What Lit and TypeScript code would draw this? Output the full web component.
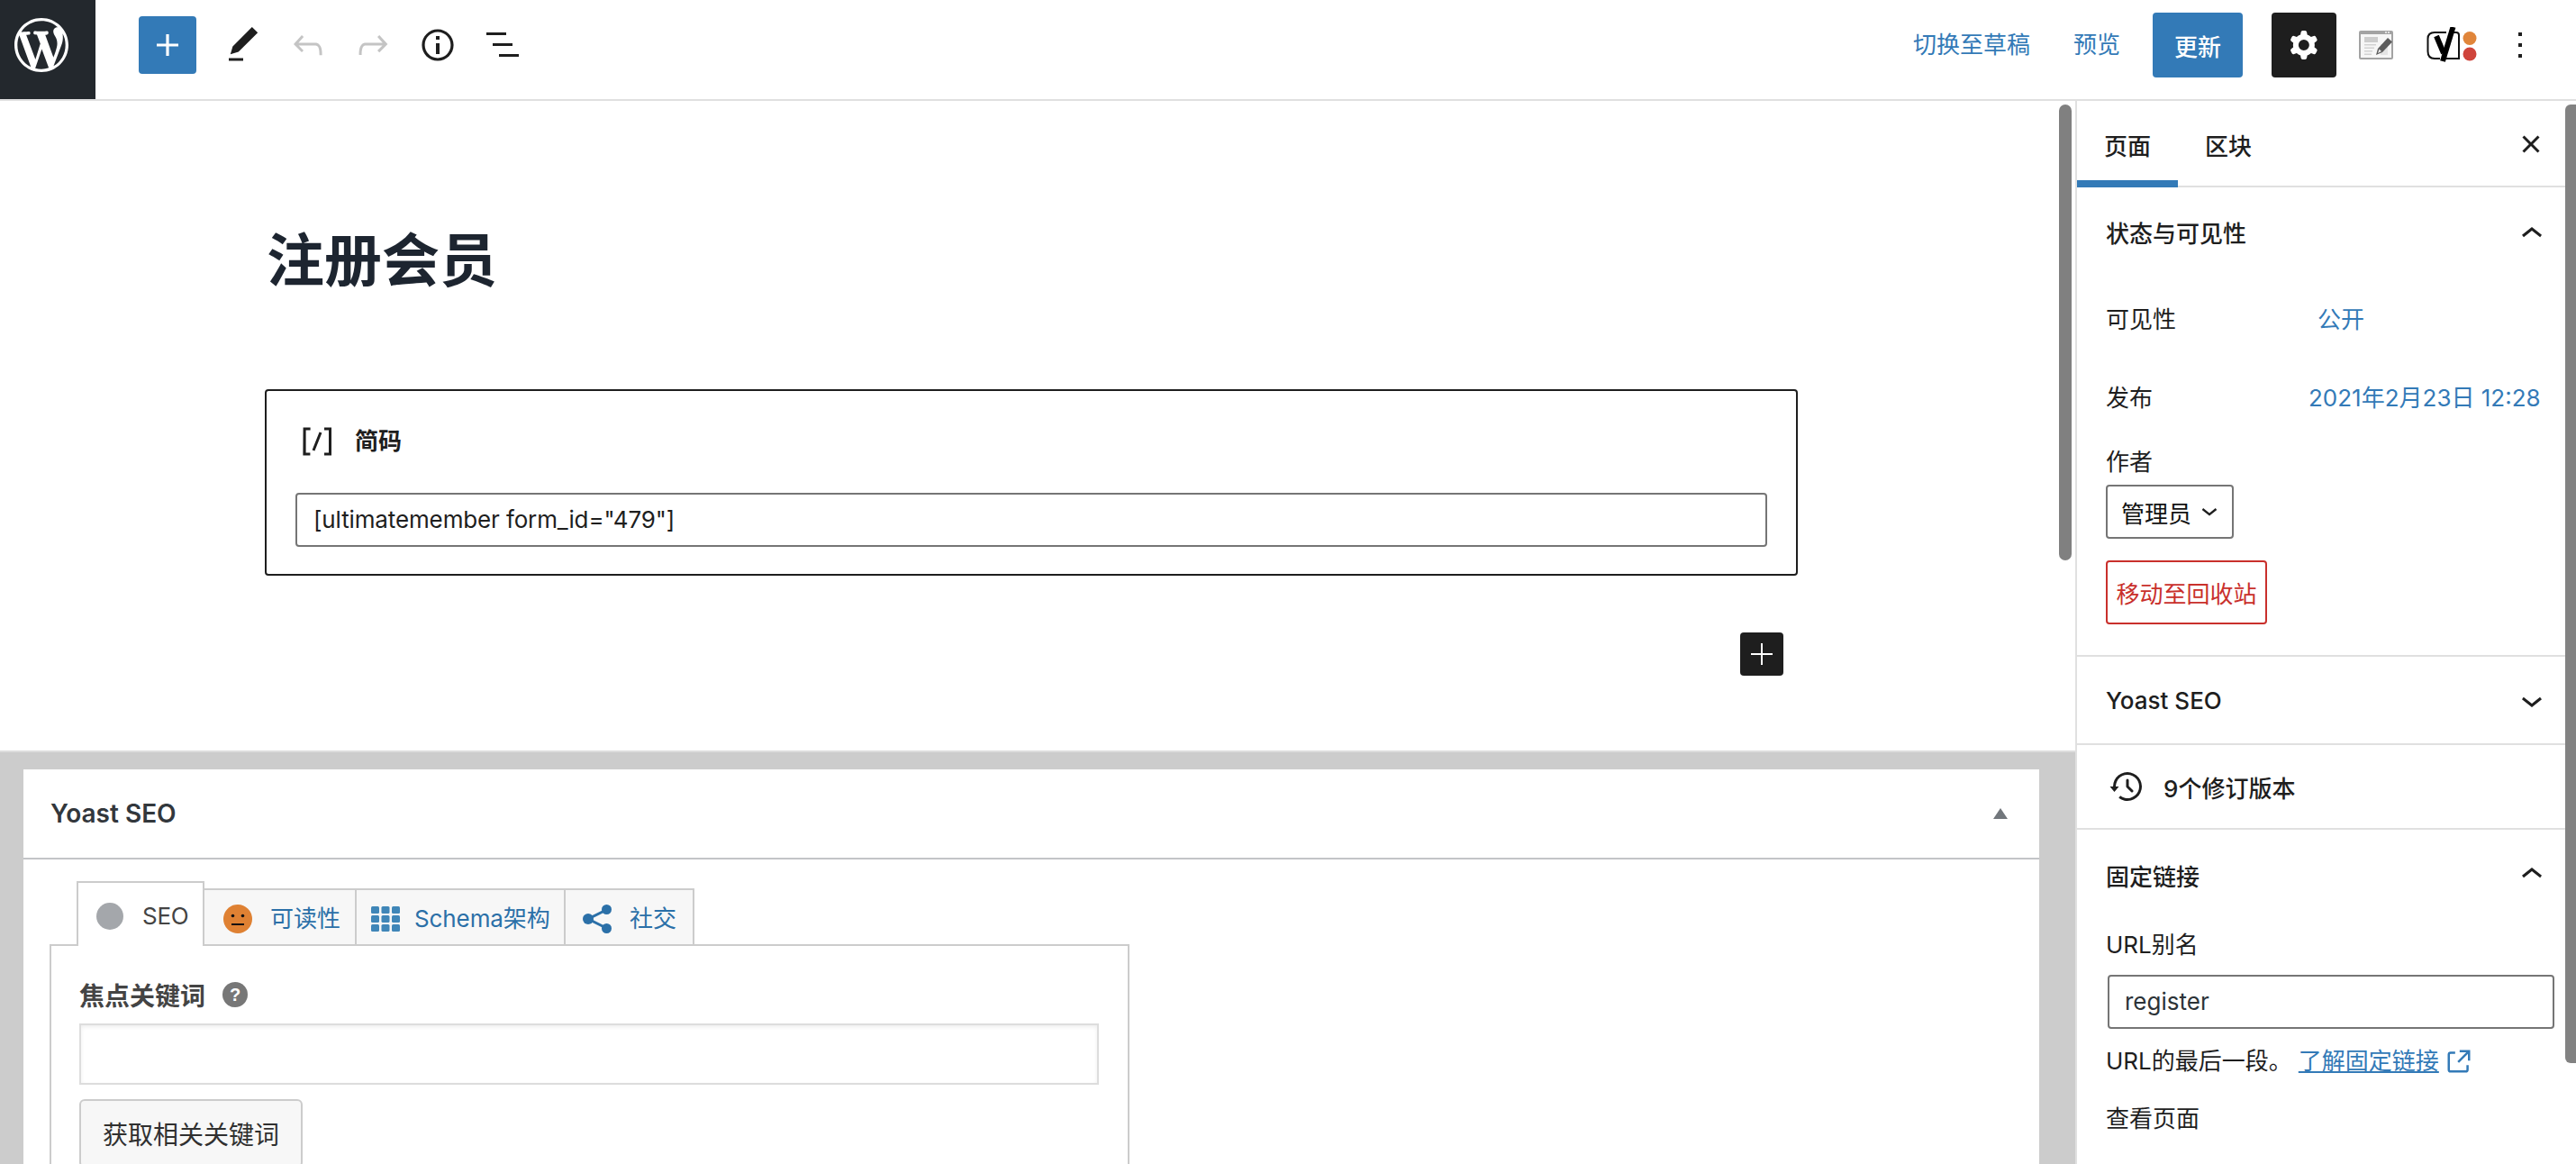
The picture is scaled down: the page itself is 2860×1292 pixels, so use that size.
import { LitElement, html, css } from "lit";
import { customElement } from "lit/decorators.js";

const up = html`<svg class="ic" viewBox="0 0 24 24"><path d="M6.5 12.4L12 8l5.5 4.4-.9 1.2L12 10l-4.5 3.6-1-1.2z"/></svg>`;
const down = html`<svg class="ic" viewBox="0 0 24 24"><path d="M17.5 11.6L12 16l-5.5-4.4.9-1.2L12 14l4.5-3.6 1 1.2z"/></svg>`;

@customElement("app-root")
export class AppRoot extends LitElement {
  static styles = css`
    :host { display: block; width: 2860px; height: 1292px; overflow: hidden; background: #fff;
      font-family: "Inter", "Noto Sans CJK SC", sans-serif; font-size: 26px; color: #1e1e1e; }
    * { box-sizing: border-box; }
    .ic { width: 48px; height: 48px; flex: none; display: block; fill: #1e1e1e; }
    .root { display: flex; flex-direction: column; height: 1292px; }

    .top { flex: none; height: 112px; border-bottom: 2px solid #e0e0e0; display: flex; align-items: center; padding-bottom: 10px; }
    .logo { width: 106px; height: 110px; margin-bottom: -10px; padding: 0 14px 10px 0; background: #23282d; display: flex; align-items: center; justify-content: center; }
    .logo svg { width: 60px; height: 60px; fill: #fff; display: block; }
    .tools { display: flex; align-items: center; gap: 24px; margin-left: 48px; }
    .add { width: 64px; height: 64px; background: #337ab7; border-radius: 4px; display: flex; align-items: center; justify-content: center; margin-right: 4px; }
    .add .ic { fill: #fff; }
    .off { fill: #c4c4c4; }
    .right { margin-left: auto; display: flex; align-items: center; padding-right: 38px; }
    .tlink { color: #337ab7; line-height: 36px; }
    .draft { margin-right: 48px; }
    .prev { margin-right: 36px; }
    .update { width: 100px; height: 72px; background: #337ab7; color: #fff; border-radius: 4px; display: flex; align-items: center; justify-content: center; margin-right: 32px; font-weight: 500; }
    .gear { width: 72px; height: 72px; background: #1e1e1e; border-radius: 4px; display: flex; align-items: center; justify-content: center; margin-right: 25px; }
    .gear .ic { fill: #fff; }
    .ypage { width: 38px; height: 32px; display: block; margin-right: 37px; }
    .ylogo { width: 58px; height: 40px; display: block; margin-right: 22px; }

    .main { flex: 1; min-height: 0; display: flex; position: relative; }
    .thumb { position: absolute; top: 4px; background: #808080; }
    .thumb.a { left: 2286px; width: 14px; height: 506px; border-radius: 7px; }
    .thumb.b { left: 2848px; width: 12px; height: 1064px; border-radius: 6px 0 0 6px; opacity: .98; }

    .content { width: 2304px; flex: none; display: flex; flex-direction: column; }
    .editor { flex: none; height: 721px; padding: 137px 0 0 294px; }
    .title { margin: 0 0 103px 2px; font-size: 64px; line-height: 80px; font-weight: 700; color: #1d2530; }
    .block { width: 1702px; height: 207px; border: 2px solid #1e1e1e; border-radius: 4px; padding: 32px 32px 0; }
    .bhead { display: flex; align-items: center; height: 48px; font-weight: 600; line-height: 48px; }
    .bhead .ic { margin-right: 18px; }
    .binput { margin-top: 33px; width: 1634px; height: 60px; border: 2px solid #757575; border-radius: 4px; padding-left: 18px; line-height: 56px; white-space: nowrap; letter-spacing: -.13px; }
    .inserter { margin: 63px 0 0 1638px; width: 48px; height: 48px; background: #1e1e1e; border-radius: 4px; display: flex; align-items: center; justify-content: center; }
    .inserter .ic { fill: #fff; }

    .meta-wrap { flex: 1; min-height: 0; overflow: hidden; background: #ccc; border-top: 2px solid #ddd; padding: 19px 40px 0 26px; }
    .meta { background: #fff; height: 100%; }
    .mhead { height: 100px; border-bottom: 2px solid #c3c4c7; display: flex; align-items: center; padding: 0 35px 0 30px; justify-content: space-between; font-size: 28px; font-weight: 600; color: #32373c; }
    .mhead svg { width: 16px; height: 12px; fill: #72777c; display: block; margin-top: 0; }
    .mbody { padding: 24px 0 0 29px; }
    .ytabs { display: flex; align-items: flex-end; margin-left: 30px; height: 72px; position: relative; z-index: 1; }
    .ytab { height: 64px; padding-top: 4px; border: 2px solid #ccc; border-left: 0; background: #f7f7f7; display: flex; align-items: center; color: #2b70a8; line-height: 36px; white-space: nowrap; }
    .ytab.on { height: 72px; width: 142px; padding-left: 20px; gap: 21px; border-left: 2px solid #ccc; border-bottom: 0; background: #fff; color: #444; letter-spacing: -.3px; }
    .ytab.read { width: 169px; padding-left: 21px; gap: 20px; }
    .ytab.sch { width: 232px; padding-left: 16px; gap: 16px; letter-spacing: -.1px; }
    .ytab.soc { width: 143px; padding-left: 19px; gap: 20px; }
    .dot { width: 30px; height: 30px; border-radius: 50%; background: #a4a7ab; flex: none; }
    .ytab svg { display: block; flex: none; }
    .ypanel { margin-top: -2px; width: 1199px; border: 2px solid #ccc; padding: 36px 31px 60px; }
    .flabel { display: flex; align-items: center; height: 36px; font-size: 28px; font-weight: 700; color: #444; gap: 19px; }
    .help { width: 28px; height: 28px; border-radius: 50%; background: #777; color: #fff; font-size: 20px; font-weight: 700; line-height: 28px; text-align: center; font-family: "Liberation Sans", sans-serif; }
    .finput { margin-top: 14px; width: 1132px; height: 68px; border: 2px solid #ddd; box-shadow: inset 0 2px 4px rgba(0,0,0,.07); }
    .fbtn { margin-top: 16px; width: 248px; height: 76px; border: 2px solid #ccc; border-radius: 6px; background: #f7f7f7; font-size: 28px; color: #303030; display: flex; align-items: center; justify-content: center; white-space: nowrap; }

    .side { width: 556px; flex: none; border-left: 2px solid #e0e0e0; display: flex; flex-direction: column; }
    .stabs { flex: none; height: 96px; border-bottom: 2px solid #e0e0e0; display: flex; align-items: stretch; position: relative; }
    .stab { width: 112px; display: flex; align-items: center; justify-content: center; font-weight: 500; border-bottom: 8px solid transparent; margin-bottom: -2px; padding-top: 8px; }
    .stab.on { border-bottom-color: #337ab7; }
    .close { margin: 2px 26px 0 auto; align-self: center; }
    .sec { border-bottom: 2px solid #e0e0e0; padding: 0 26px 0 32px; flex: none; }
    .shead { display: flex; align-items: center; justify-content: space-between; font-weight: 500; height: 104px; margin-right: -1px; }
    .shead .txt { margin-top: -6px; }
    .shead.y { height: 96px; }
    .shead.p { height: 100px; }
    .shead.p .txt { margin-top: 0; }
    .shead.y .txt { margin-top: 0; }
    .row { display: flex; align-items: center; line-height: 36px; }
    .row.vis { height: 85px; }
    .row.pub { height: 90px; }
    .vl { color: #337ab7; }
    .l1 { width: 235px; }
    .l2 { width: 225px; }
    .line { line-height: 36px; height: 36px; white-space: nowrap; display: flex; align-items: center; }
    .select { width: 142px; height: 60px; border: 2px solid #757575; border-radius: 4px; margin-top: 7px; display: flex; align-items: center; padding-left: 15px; color: #111; }
    .select svg { width: 36px; height: 36px; margin-left: 2px; fill: #1e1e1e; flex: none; }
    .trash { margin-top: 24px; width: 179px; height: 71px; border: 2px solid #c9302c; border-radius: 4px; color: #c9302c; display: flex; align-items: center; justify-content: center; white-space: nowrap; }
    .hist { height: 92px; display: flex; align-items: center; font-weight: 500; gap: 16px; }
    .slug { margin: 15px 0 0 2px; width: 496px; height: 60px; border: 2px solid #757575; border-radius: 4px; padding-left: 17px; line-height: 56px; color: #2c3338; }
    .lk { color: #337ab7; text-decoration: underline; margin-left: 7px; }
    .line svg { width: 40px; height: 40px; fill: #337ab7; margin-left: 2px; display: block; }
  `;

  render() {
    return html`<div class="root">
      <header class="top">
        <div class="logo"><svg viewBox="0 0 20 20"><path d="M20 10c0-5.51-4.49-10-10-10C4.48 0 0 4.49 0 10c0 5.52 4.48 10 10 10 5.51 0 10-4.48 10-10zM7.78 15.37L4.37 6.22c.55-.02 1.17-.08 1.17-.08.5-.06.44-1.13-.06-1.11 0 0-1.45.11-2.37.11-.18 0-.37 0-.58-.01C4.12 2.69 6.87 1.11 10 1.11c2.33 0 4.45.87 6.05 2.34-.68-.11-1.65.39-1.65 1.58 0 .74.45 1.36.9 2.1.35.61.55 1.36.55 2.46 0 1.49-1.4 5-1.4 5l-3.03-8.37c.54-.02.82-.17.82-.17.5-.05.44-1.25-.06-1.22 0 0-1.44.12-2.38.12-.87 0-2.33-.12-2.33-.12-.5-.03-.56 1.2-.06 1.22l.92.08 1.26 3.41zM17.41 10c.24-.64.74-1.87.43-4.25.7 1.29 1.05 2.71 1.05 4.25 0 3.29-1.73 6.24-4.4 7.78.97-2.59 1.94-5.2 2.92-7.78zM6.1 18.09C3.12 16.65 1.11 13.53 1.11 10c0-1.3.23-2.48.72-3.59C3.25 10.3 4.67 14.2 6.1 18.09zm4.03-6.63l2.58 6.98c-.86.29-1.76.45-2.71.45-.79 0-1.57-.11-2.29-.33.81-2.38 1.62-4.74 2.42-7.1z"/></svg></div>
        <div class="tools">
          <div class="add"><svg class="ic" viewBox="0 0 24 24"><path d="M18 11.2h-5.2V6h-1.6v5.2H6v1.6h5.2V18h1.6v-5.2H18z"/></svg></div>
          <svg class="ic" viewBox="0 0 24 24"><path d="M20.1 5.1L16.9 2 6.2 12.7l-1.3 4.4 4.5-1.3L20.1 5.1zM4 20.8h8v-1.5H4v1.5z"/></svg>
          <svg class="ic off" viewBox="0 0 24 24"><path d="M18.3 11.7c-.6-.6-1.4-.9-2.3-.9H6.7l2.9-3.3-1.1-1-4.5 5L8.5 16l1-1-2.7-2.7H16c.5 0 .9.2 1.3.5 1 1 1 3.4 1 4.5v.3h1.5v-.2c0-1.5 0-4.3-1.5-5.7z"/></svg>
          <svg class="ic off" viewBox="0 0 24 24"><path d="M15.6 6.5l-1.1 1 2.9 3.3H8c-.9 0-1.7.3-2.3.9-1.4 1.5-1.4 4.2-1.4 5.6v.2h1.5v-.3c0-1.1 0-3.5 1-4.5.3-.3.7-.5 1.3-.5h9.2L14.5 15l1.1 1.1 4.6-4.6-4.6-5z"/></svg>
          <svg class="ic" viewBox="0 0 24 24"><path d="M12 3.2c-4.8 0-8.8 3.9-8.8 8.8 0 4.8 3.9 8.8 8.8 8.8 4.8 0 8.8-3.9 8.8-8.8 0-4.8-4-8.8-8.8-8.8zm0 16c-4 0-7.2-3.3-7.2-7.2C4.8 8 8 4.8 12 4.8s7.2 3.3 7.2 7.2c0 4-3.2 7.2-7.2 7.2zM11 17h2v-6h-2v6zm0-8h2V7h-2v2z"/></svg>
          <svg class="ic" viewBox="0 0 48 48"><path d="M6 10h22v3H6zM13 22h22v3H13zM20 34h22v3H20z"/></svg>
        </div>
        <div class="right">
          <span class="tlink draft">切换至草稿</span>
          <span class="tlink prev">预览</span>
          <div class="update">更新</div>
          <div class="gear"><svg class="ic" viewBox="0 0 24 24"><path fill-rule="evenodd" d="M10.289 4.836A1 1 0 0111.275 4h1.306a1 1 0 01.987.836l.244 1.466c.787.26 1.503.679 2.108 1.218l1.393-.522a1 1 0 011.216.437l.653 1.13a1 1 0 01-.23 1.273l-1.148.944a6.025 6.025 0 010 2.435l1.149.946a1 1 0 01.23 1.272l-.653 1.13a1 1 0 01-1.216.437l-1.394-.522c-.605.54-1.32.958-2.108 1.218l-.244 1.466a1 1 0 01-.987.836h-1.306a1 1 0 01-.986-.836l-.244-1.466a5.995 5.995 0 01-2.108-1.218l-1.394.522a1 1 0 01-1.217-.436l-.653-1.131a1 1 0 01.23-1.272l1.149-.946a6.026 6.026 0 010-2.435l-1.148-.944a1 1 0 01-.23-1.272l.653-1.131a1 1 0 011.217-.437l1.393.522a5.994 5.994 0 012.108-1.218l.244-1.466zM14.929 12a3 3 0 11-6 0 3 3 0 016 0z"/></svg></div>
          <svg class="ypage" viewBox="0 0 38 32">
            <rect width="38" height="32" rx="2" fill="#a3a3a3"/>
            <rect x="2" y="4" width="34" height="26" fill="#f6f6f6"/>
            <rect x="29" y="1.2" width="2" height="1.6" fill="#eee"/><rect x="32" y="1.2" width="2" height="1.6" fill="#eee"/>
            <rect x="6" y="7" width="15" height="6" fill="#cdcdcd"/>
            <path d="M6 15h13v1.5H6zM6 18.5h11V20H6zM6 22h9v1.5H6zM6 25.5h8V27H6z" fill="#d2d2d2"/>
            <path d="M24 15h8v12H24z" fill="#e4e4e4"/>
            <path d="M19 27l2-7L32 8l5 4.5L26 24z" fill="#5c5c5c"/>
            <path d="M22.5 20.5l2.5 2.5-4 2z" fill="#e9e9e9"/>
          </svg>
          <svg class="ylogo" viewBox="0 0 58 40">
            <path d="M22 6H9Q1.5 6 1.5 13V27Q1.5 35 9 35H15M30 6H33Q36 6 36 9V35H21" fill="none" stroke="#111" stroke-width="2"/>
            <path d="M11 10L19 29" stroke="#000" stroke-width="6" fill="none"/>
            <path d="M29.5 0L18 38" stroke="#000" stroke-width="6" fill="none"/>
            <circle cx="48" cy="12.5" r="7.5" fill="#e0853a"/>
            <circle cx="48" cy="30" r="7.5" fill="#cf443b"/>
          </svg>
          <svg class="ic" viewBox="0 0 24 24"><path d="M13 19h-2v-2h2v2zm0-6h-2v-2h2v2zm0-6h-2V5h2v2z"/></svg>
        </div>
      </header>
      <div class="main">
        <div class="content">
          <div class="editor">
            <h1 class="title">注册会员</h1>
            <div class="block">
              <div class="bhead"><svg class="ic" viewBox="0 0 24 24"><path d="M16 4.2v1.5h2.5v12.5H16v1.5h4V4.2h-4zM4.2 19.8h4v-1.5H5.8V5.8h2.5V4.2h-4l-.1 15.6zm5.1-3.1l1.4.6 4-10-1.4-.6-4 10z"/></svg>简码</div>
              <div class="binput">[ultimatemember form_id="479"]</div>
            </div>
            <div class="inserter"><svg class="ic" viewBox="0 0 24 24"><path d="M18 11.5h-5.5V6h-1v5.5H6v1h5.5V18h1v-5.5H18z"/></svg></div>
          </div>
          <div class="meta-wrap">
            <div class="meta">
              <div class="mhead"><span>Yoast SEO</span><svg viewBox="0 0 16 12"><path d="M8 0l8 12H0z"/></svg></div>
              <div class="mbody">
                <div class="ytabs">
                  <div class="ytab on"><span class="dot"></span>SEO</div>
                  <div class="ytab read"><svg width="32" height="32" viewBox="0 0 32 32"><circle cx="16" cy="16" r="16" fill="#df8133"/><circle cx="10.5" cy="12.5" r="1.8" fill="#111"/><circle cx="21.5" cy="12.5" r="1.8" fill="#111"/><rect x="9" y="21" width="14" height="2" fill="#111"/></svg>可读性</div>
                  <div class="ytab sch"><svg width="32" height="28" viewBox="0 0 32 28" fill="#3f86b8"><rect width="9" height="8" rx="1.5"/><rect x="11.5" width="9" height="8" rx="1.5"/><rect x="23" width="9" height="8" rx="1.5"/><rect y="10" width="9" height="8" rx="1.5"/><rect x="11.5" y="10" width="9" height="8" rx="1.5"/><rect x="23" y="10" width="9" height="8" rx="1.5"/><rect y="20" width="9" height="8" rx="1.5"/><rect x="11.5" y="20" width="9" height="8" rx="1.5"/><rect x="23" y="20" width="9" height="8" rx="1.5"/></svg>Schema架构</div>
                  <div class="ytab soc"><svg width="32" height="32" viewBox="0 0 32 32"><path d="M26 6L6 16l20 10" fill="none" stroke="#2b70a8" stroke-width="3"/><circle cx="26.5" cy="5.5" r="5.5" fill="#2b70a8"/><circle cx="6" cy="16" r="6" fill="#2b70a8"/><circle cx="26.5" cy="26.5" r="5.5" fill="#2b70a8"/></svg>社交</div>
                </div>
                <div class="ypanel">
                  <div class="flabel">焦点关键词<span class="help">?</span></div>
                  <div class="finput"></div>
                  <div class="fbtn">获取相关关键词</div>
                </div>
              </div>
            </div>
          </div>
        </div>
        <aside class="side">
          <div class="stabs">
            <div class="stab on">页面</div>
            <div class="stab">区块</div>
            <svg class="ic close" viewBox="0 0 24 24"><path d="M12 13.06l3.712 3.713 1.061-1.06L13.061 12l3.712-3.712-1.06-1.06L12 10.938 8.288 7.227l-1.061 1.06L10.939 12l-3.712 3.712 1.06 1.061L12 13.061z"/></svg>
          </div>
          <section class="sec" style="height:521px">
            <div class="shead"><span class="txt">状态与可见性</span>${up}</div>
            <div class="row vis"><span class="l1">可见性</span><span class="vl">公开</span></div>
            <div class="row pub"><span class="l2">发布</span><span class="vl">2021年2月23日 12:28</span></div>
            <div class="line" style="margin-top:8px">作者</div>
            <div class="select">管理员<svg viewBox="0 0 24 24"><path d="M17.5 11.6L12 16l-5.5-4.4.9-1.2L12 14l4.5-3.6 1 1.2z" transform="translate(0 -1)"/></svg></div>
            <div class="trash">移动至回收站</div>
          </section>
          <section class="sec">
            <div class="shead y"><span class="txt">Yoast SEO</span>${down}</div>
          </section>
          <section class="sec">
            <div class="hist"><svg class="ic" viewBox="0 0 24 24"><path d="M5.5 12h1.75l-2.5 3-2.5-3H4a8 8 0 113.134 6.35l.907-1.194A6.5 6.5 0 105.5 12zm9.53 1.97l-2.28-2.28V8.5a.75.75 0 00-1.5 0V12a.747.747 0 00.218.529l1.282-.84-1.28.842 2.5 2.5a.75.75 0 101.06-1.061z"/></svg>9个修订版本</div>
          </section>
          <section class="sec" style="border-bottom:0">
            <div class="shead p"><span class="txt">固定链接</span>${up}</div>
            <div class="line" style="margin-top:10px">URL别名</div>
            <div class="slug">register</div>
            <div class="line" style="margin-top:18px">URL的最后一段。<span class="lk">了解固定链接</span><svg viewBox="0 0 24 24"><path d="M19.5 4.5h-7V6h4.44l-5.97 5.97 1.06 1.06L18 7.06v4.44h1.5v-7Zm-13 1a2 2 0 0 0-2 2v10a2 2 0 0 0 2 2h10a2 2 0 0 0 2-2v-3H17v3a.5.5 0 0 1-.5.5h-10a.5.5 0 0 1-.5-.5v-10a.5.5 0 0 1 .5-.5h3V5.5h-3Z"/></svg></div>
            <div class="line" style="margin-top:28px">查看页面</div>
          </section>
        </aside>
        <div class="thumb a"></div>
        <div class="thumb b"></div>
      </div>
    </div>`;
  }
}
